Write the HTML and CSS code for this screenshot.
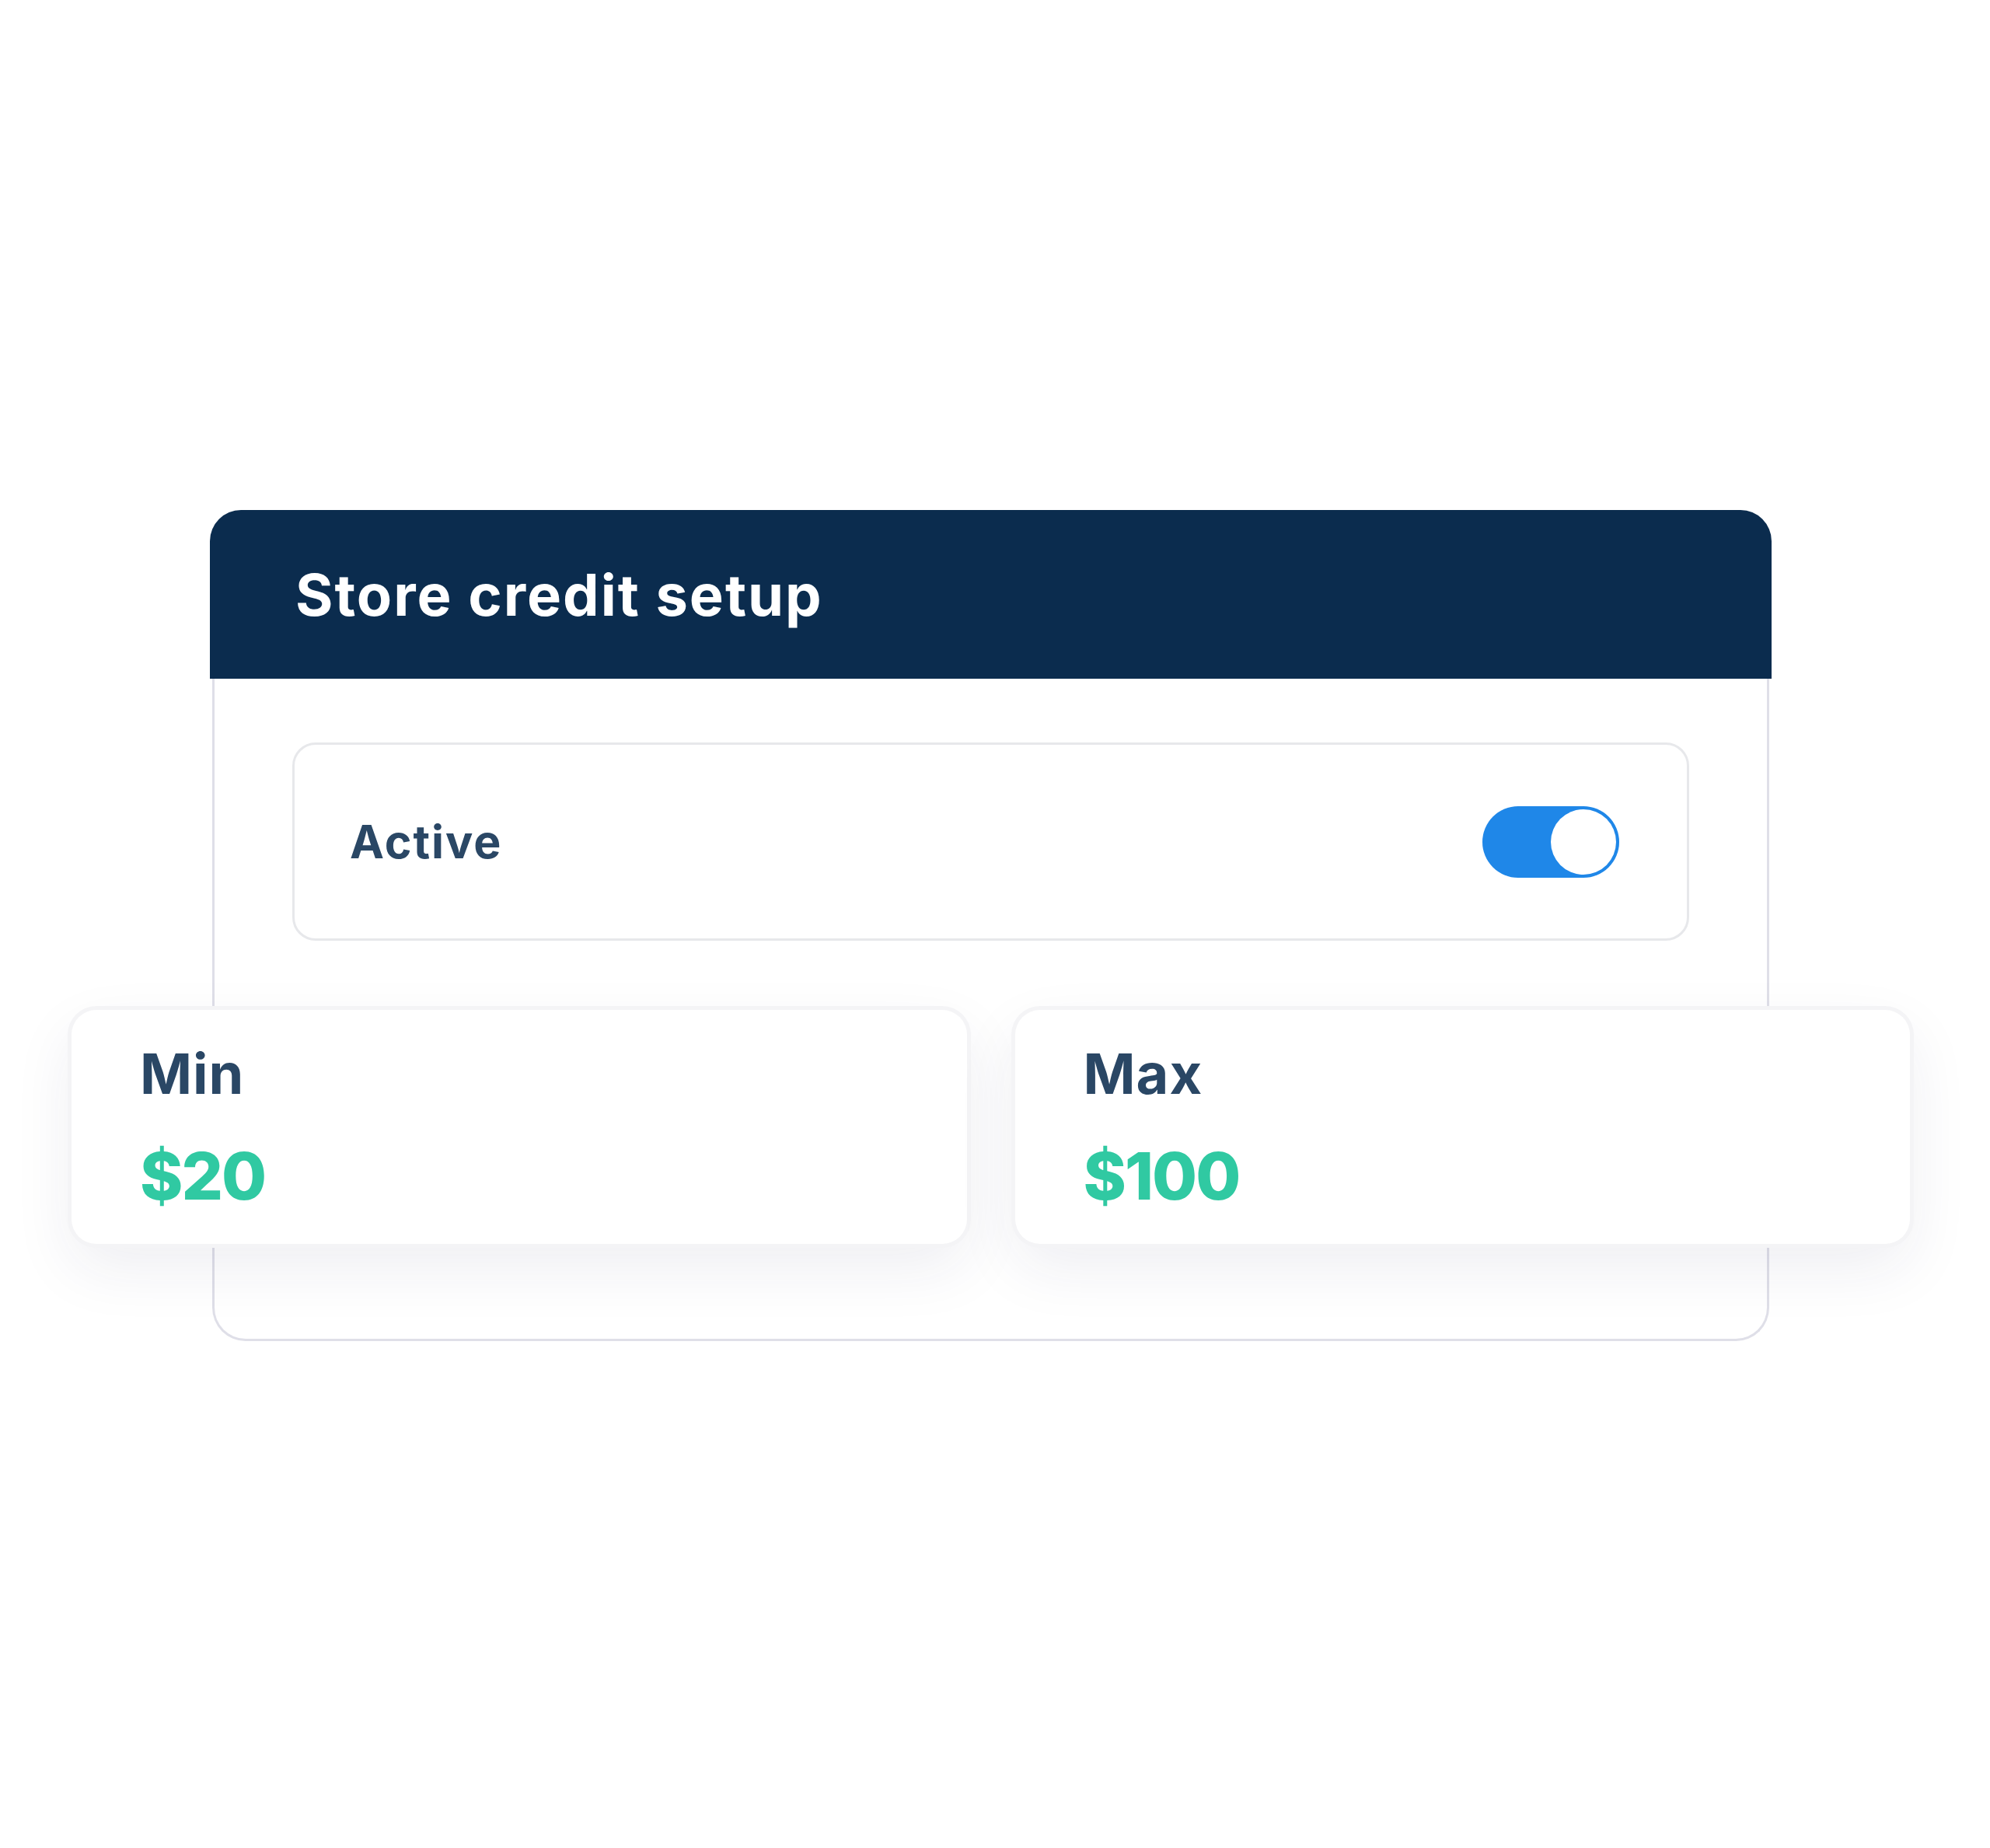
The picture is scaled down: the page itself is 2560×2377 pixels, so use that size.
FILE: index.html
```html
<!DOCTYPE html>
<html lang="en">
<head>
  <meta charset="UTF-8" />
  <title>Store credit setup</title>
  <link rel="stylesheet" href="styles.css">
</head>
<body>
  <div class="scene">
    <div class="panel">
      <div class="panel-header">
        <h1>Store credit setup</h1>
      </div>
      <div class="panel-body">
        <div class="setting-row">
          <span class="setting-label">Active</span>
          <span class="toggle is-on"><span class="toggle-knob"></span></span>
        </div>
      </div>
    </div>

    <div class="limits">
      <div class="limit-card">
        <div class="limit-label">Min</div>
        <div class="limit-value">$20</div>
      </div>
      <div class="limit-card">
        <div class="limit-label">Max</div>
        <div class="limit-value">$100</div>
      </div>
    </div>
  </div>
</body>
</html>
```

FILE: styles.css
```css
body {
  font-family: 'Inter', 'Liberation Sans', Arial, sans-serif;
  margin: 0;
  padding-top: 656px;
  background-color: #fff;
  color: #2a4765;
  height: 1721px;
}

.scene {
  position: relative;
  width: 2009px;
  margin-left: 270px;
}

.panel-header {
  height: 217px;
  display: flex;
  align-items: center;
  padding-left: 110px;
  background-color: #0b2c4e;
  border-radius: 40px 40px 0 0;
}

.panel-header h1 {
  margin: 0;
  font-size: 74px;
  line-height: 1;
  font-weight: 700;
  letter-spacing: 2px;
  color: #fff;
}

.panel-body {
  box-sizing: border-box;
  height: 852px;
  margin: 0 3px;
  padding: 82px 100px 0;
  border: 3px solid #dfdfe8;
  border-top: none;
  border-radius: 0 0 43px 43px;
}

.setting-row {
  height: 255px;
  box-sizing: border-box;
  display: flex;
  align-items: center;
  justify-content: space-between;
  padding: 0 87px 0 71px;
  border: 3px solid #e7e8eb;
  border-radius: 30px;
}

.setting-label {
  font-size: 59px;
  line-height: 1;
  font-weight: 700;
  letter-spacing: 2px;
  color: #2a4765;
}

.toggle {
  position: relative;
  width: 176px;
  height: 92px;
  border-radius: 46px;
  background-color: #dfe3ea;
}

.toggle.is-on {
  background-color: #1f87e8;
}

.toggle-knob {
  position: absolute;
  top: 4px;
  left: 4px;
  width: 84px;
  height: 84px;
  border-radius: 50%;
  background: #fff;
}

.toggle.is-on .toggle-knob {
  left: auto;
  right: 4px;
}

.limits {
  position: absolute;
  top: 643px;
  left: -178px;
  width: 2365px;
  display: grid;
  grid-template-columns: 1fr 1fr;
  gap: 62px;
}

.limit-card {
  height: 301px;
  box-sizing: border-box;
  padding: 46px 88px 0;
  background: #fff;
  border-radius: 32px;
  box-shadow: 0 0 0 5px #f4f4f6, 0 30px 80px rgba(40, 40, 90, 0.08);
}

.limit-label {
  font-size: 72px;
  line-height: 1;
  font-weight: 700;
  letter-spacing: 1px;
  color: #2a4765;
}

.limit-value {
  margin-top: 54px;
  font-size: 84px;
  line-height: 1;
  font-weight: 800;
  letter-spacing: -2px;
  color: #30c9a2;
}
```
